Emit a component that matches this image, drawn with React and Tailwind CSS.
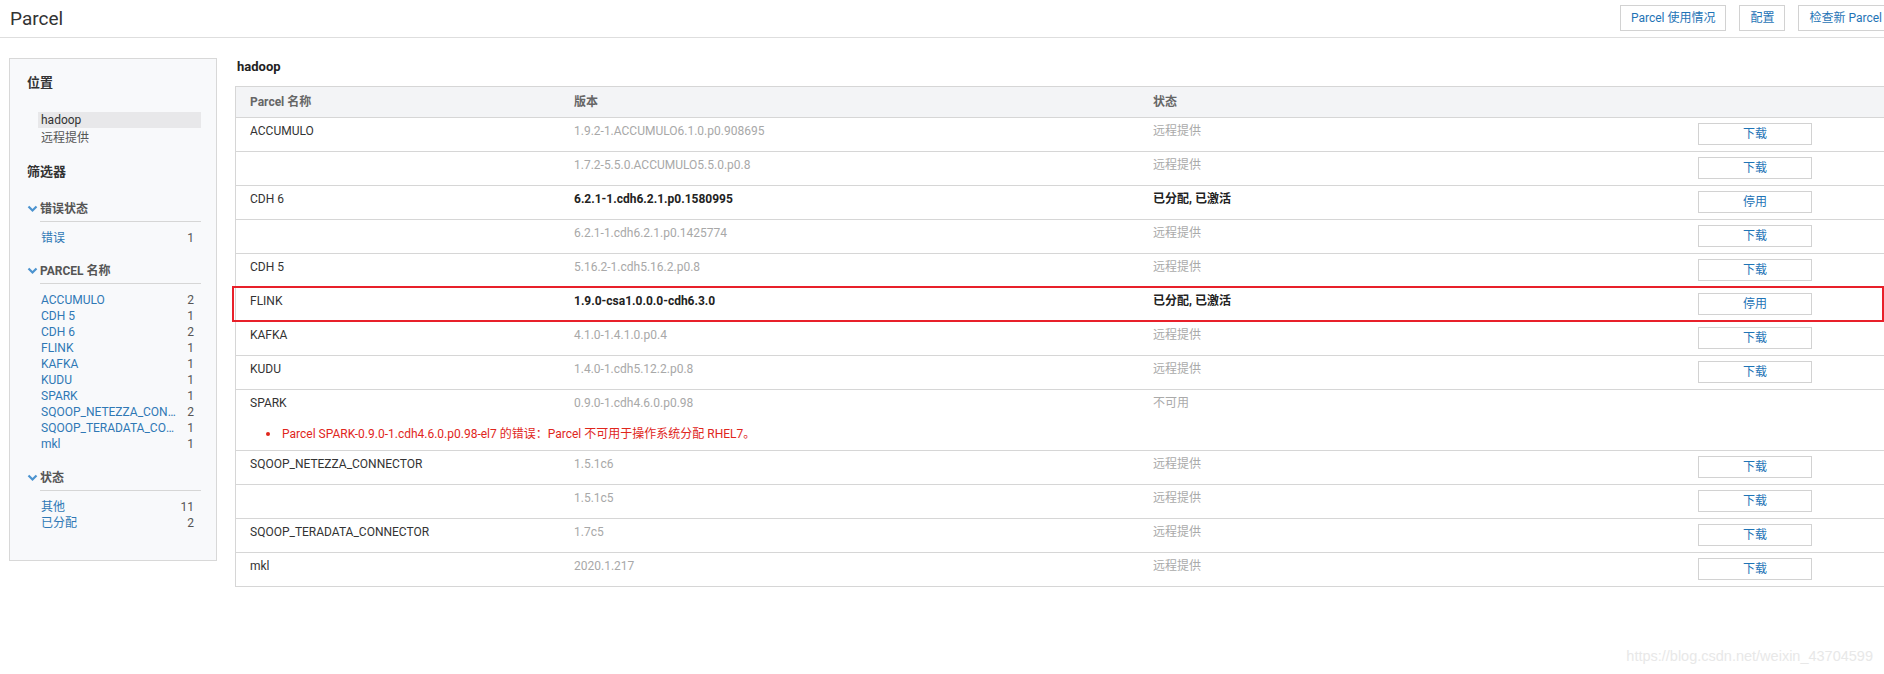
import React from 'react'

const rows = [
  { name: 'ACCUMULO', version: '1.9.2-1.ACCUMULO6.1.0.p0.908695', status: '远程提供', action: '下载' },
  { name: '', version: '1.7.2-5.5.0.ACCUMULO5.5.0.p0.8', status: '远程提供', action: '下载' },
  { name: 'CDH 6', version: '6.2.1-1.cdh6.2.1.p0.1580995', status: '已分配, 已激活', action: '停用', active: true },
  { name: '', version: '6.2.1-1.cdh6.2.1.p0.1425774', status: '远程提供', action: '下载' },
  { name: 'CDH 5', version: '5.16.2-1.cdh5.16.2.p0.8', status: '远程提供', action: '下载' },
  { name: 'FLINK', version: '1.9.0-csa1.0.0.0-cdh6.3.0', status: '已分配, 已激活', action: '停用', active: true, marked: true },
  { name: 'KAFKA', version: '4.1.0-1.4.1.0.p0.4', status: '远程提供', action: '下载' },
  { name: 'KUDU', version: '1.4.0-1.cdh5.12.2.p0.8', status: '远程提供', action: '下载' },
  {
    name: 'SPARK',
    version: '0.9.0-1.cdh4.6.0.p0.98',
    status: '不可用',
    error: 'Parcel SPARK-0.9.0-1.cdh4.6.0.p0.98-el7 的错误：Parcel 不可用于操作系统分配 RHEL7。'
  },
  { name: 'SQOOP_NETEZZA_CONNECTOR', version: '1.5.1c6', status: '远程提供', action: '下载' },
  { name: '', version: '1.5.1c5', status: '远程提供', action: '下载' },
  { name: 'SQOOP_TERADATA_CONNECTOR', version: '1.7c5', status: '远程提供', action: '下载' },
  { name: 'mkl', version: '2020.1.217', status: '远程提供', action: '下载' }
]

const parcelNames = [
  ['ACCUMULO', 2],
  ['CDH 5', 1],
  ['CDH 6', 2],
  ['FLINK', 1],
  ['KAFKA', 1],
  ['KUDU', 1],
  ['SPARK', 1],
  ['SQOOP_NETEZZA_CONNECTOR', 2],
  ['SQOOP_TERADATA_CONNECTOR', 1],
  ['mkl', 1]
]

function Chevron() {
  return (
    <svg width="13" height="16" viewBox="0 0 13 16" className="shrink-0">
      <polyline points="1.5,5.5 5.5,9.5 9.5,5.5" fill="none" stroke="#4b93cf" strokeWidth="2.2" />
    </svg>
  )
}

function FilterGroup({ title, items, className }) {
  return (
    <div className={className}>
      <div className="flex items-start">
        <Chevron />
        <div className="flex-1 border-b border-[#d6d6d6] pb-[4px] text-[12px] leading-[16px] font-bold text-[#555]">
          {title}
        </div>
      </div>
      <div className="ml-[13px] mt-[8px] pr-[7px]">
        {items.map(([label, count]) => (
          <div key={label} className="flex text-[12px] leading-[16px]">
            <span className="block w-[142px] overflow-hidden text-ellipsis whitespace-nowrap pl-[1px] text-[#2f78b5]">
              {label}
            </span>
            <span className="ml-auto text-[#555]">{count}</span>
          </div>
        ))}
      </div>
    </div>
  )
}

function Sidebar() {
  return (
    <aside className="w-[208px] h-[503px] shrink-0 border border-[#d8d8d8] bg-[#f8f9fb] pl-[17px] pr-[15px] pt-[15px]">
      <div className="text-[13px] leading-[18px] font-bold text-[#333]">位置</div>
      <div className="mt-[20px] ml-[11px] bg-[#e8e8ea] pl-[3px] text-[12px] leading-[16px] text-[#333]">hadoop</div>
      <div className="mt-[2px] ml-[11px] pl-[3px] text-[12px] leading-[16px] text-[#555]">远程提供</div>
      <div className="mt-[17px] text-[13px] leading-[18px] font-bold text-[#333]">筛选器</div>

      <FilterGroup className="mt-[20px]" title="错误状态" items={[['错误', 1]]} />
      <FilterGroup className="mt-[17px]" title="PARCEL 名称" items={parcelNames} />
      <FilterGroup className="mt-[18px]" title="状态" items={[['其他', 11], ['已分配', 2]]} />
    </aside>
  )
}

function Row({ row }) {
  const versionCls = row.active ? 'font-bold text-[#222]' : 'text-[#a8a8a8]'
  const statusCls = row.active ? 'font-bold text-[#222]' : 'text-[#aaa]'

  return (
    <div className="relative border-b border-[#d6d6d6]">
      <div className="flex text-[12px] leading-[16px]">
        <div className="w-[324px] shrink-0 pl-[14px] pt-[5px] text-[#333]">{row.name}</div>
        <div className={`w-[579px] shrink-0 pl-[14px] pt-[5px] ${versionCls}`}>{row.version}</div>
        <div className={`w-[559px] shrink-0 pl-[14px] pt-[5px] ${statusCls}`}>{row.status}</div>
        <div className="w-[114px] shrink-0 h-[33px] pt-[5px]">
          {row.action && (
            <button className="w-full h-[22px] border border-[#d2d2d2] bg-white text-[12px] text-[#1f74b6]">
              {row.action}
            </button>
          )}
        </div>
      </div>

      {row.error && (
        <div className="flex items-center pl-[30px] pt-[3px] pb-[8px] text-[12px] leading-[16px] text-[#e0261c]">
          <span className="w-[4px] h-[4px] rounded-full bg-[#e0261c] shrink-0" />
          <span className="ml-[12px]">{row.error}</span>
        </div>
      )}

      {/* red annotation frame */}
      {row.marked && (
        <div className="absolute left-[-4px] top-[-2px] w-[1652px] h-[36px] border-2 border-[#e8202a] pointer-events-none" />
      )}
    </div>
  )
}

export default function App() {
  return (
    <div className="relative w-full min-h-[674px] overflow-hidden bg-white font-[Roboto,'Noto_Sans_CJK_SC',sans-serif]">
      <div className="w-[1905px]">
        {/* Header */}
        <header className="h-[38px] border-b border-[#dedede] flex items-center justify-between pl-[10px] pr-[12px]">
          <h1 className="text-[19px] leading-none text-[#333] -mt-[1px]">Parcel</h1>
          <div className="flex items-center gap-[13px] -mt-[1px]">
            <button className="h-[26px] px-[10px] border border-[#d2d2d2] bg-white text-[12px] text-[#1f74b6]">Parcel 使用情况</button>
            <button className="h-[26px] px-[10px] border border-[#d2d2d2] bg-white text-[12px] text-[#1f74b6]">配置</button>
            <button className="h-[26px] px-[10px] border border-[#d2d2d2] bg-white text-[12px] text-[#1f74b6]">检查新 Parcel</button>
          </div>
        </header>

        <div className="flex items-start pt-[20px] pl-[9px]">
          <Sidebar />

          <main className="ml-[18px] flex-1">
            <h2 className="text-[13px] leading-[18px] font-bold text-[#222] pl-[2px]">hadoop</h2>
            <div className="mt-[10px] border-t border-l border-[#d6d6d6]">
              <div className="flex items-center h-[31px] bg-[#f3f4f6] border-b border-[#d6d6d6] text-[12px] font-bold text-[#666]">
                <div className="w-[324px] pl-[14px]">Parcel 名称</div>
                <div className="w-[579px] pl-[14px]">版本</div>
                <div className="w-[559px] pl-[14px]">状态</div>
              </div>
              {rows.map((row, i) => (
                <Row key={i} row={row} />
              ))}
            </div>
          </main>
        </div>
      </div>

      <div className="absolute right-[11px] top-[646px] text-[14.5px] text-[#e8e8e8] font-['Liberation_Sans',Arial,sans-serif]">
        https://blog.csdn.net/weixin_43704599
      </div>
    </div>
  )
}
